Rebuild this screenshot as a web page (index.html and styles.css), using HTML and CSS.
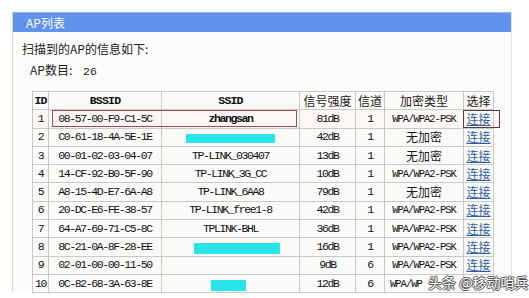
FILE: index.html
```html
<!DOCTYPE html>
<html lang="zh-CN">
<head>
    <meta charset="UTF-8">
    <meta name="viewport" content="width=device-width, initial-scale=1.0">
    <title>AP列表</title>
    <link rel="stylesheet" href="styles.css">
</head>
<body>
    <div class="panel">
        <div class="panel-title">AP列表</div>
        <div class="panel-body">
            <p class="intro">扫描到的AP的信息如下:</p>
            <p class="count"><span class="count-label">AP数目:</span><span class="count-num">26</span></p>
            <div class="table-wrap">
                <table class="ap-table">
                    <colgroup>
                        <col style="width:16px">
                        <col style="width:113px">
                        <col style="width:138px">
                        <col style="width:56px">
                        <col style="width:29px">
                        <col style="width:79px">
                        <col style="width:30px">
                    </colgroup>
                    <thead>
                        <tr>
                            <th class="mono">ID</th>
                            <th class="mono">BSSID</th>
                            <th class="mono">SSID</th>
                            <th>信号强度</th>
                            <th>信道</th>
                            <th>加密类型</th>
                            <th>选择</th>
                        </tr>
                    </thead>
                    <tbody>
                        <tr class="picked">
                            <td class="mono">1</td><td class="mono">08-57-00-F9-C1-5C</td><td class="mono ssid-bold">zhangsan</td>
                            <td class="mono">81dB</td><td class="mono">1</td><td class="mono small">WPA/WPA2-PSK</td><td><a href="#">连接</a></td>
                        </tr>
                        <tr>
                            <td class="mono">2</td><td class="mono">C0-61-18-4A-5E-1E</td><td><span class="redact r2"></span></td>
                            <td class="mono">42dB</td><td class="mono">1</td><td>无加密</td><td><a href="#">连接</a></td>
                        </tr>
                        <tr>
                            <td class="mono">3</td><td class="mono">00-01-02-03-04-07</td><td class="mono">TP-LINK_030407</td>
                            <td class="mono">13dB</td><td class="mono">1</td><td>无加密</td><td><a href="#">连接</a></td>
                        </tr>
                        <tr>
                            <td class="mono">4</td><td class="mono">14-CF-92-B0-5F-90</td><td class="mono">TP-LINK_3G_CC</td>
                            <td class="mono">10dB</td><td class="mono">1</td><td class="mono small">WPA/WPA2-PSK</td><td><a href="#">连接</a></td>
                        </tr>
                        <tr>
                            <td class="mono">5</td><td class="mono">A8-15-4D-E7-6A-A8</td><td class="mono">TP-LINK_6AA8</td>
                            <td class="mono">79dB</td><td class="mono">1</td><td>无加密</td><td><a href="#">连接</a></td>
                        </tr>
                        <tr>
                            <td class="mono">6</td><td class="mono">20-DC-E6-FE-38-57</td><td class="mono">TP-LINK_free1-8</td>
                            <td class="mono">42dB</td><td class="mono">1</td><td class="mono small">WPA/WPA2-PSK</td><td><a href="#">连接</a></td>
                        </tr>
                        <tr>
                            <td class="mono">7</td><td class="mono">64-A7-69-71-C5-8C</td><td class="mono">TPLINK-BHL</td>
                            <td class="mono">36dB</td><td class="mono">1</td><td class="mono small">WPA/WPA2-PSK</td><td><a href="#">连接</a></td>
                        </tr>
                        <tr>
                            <td class="mono">8</td><td class="mono">8C-21-0A-8F-28-EE</td><td><span class="redact r8"></span></td>
                            <td class="mono">16dB</td><td class="mono">1</td><td class="mono small">WPA/WPA2-PSK</td><td><a href="#">连接</a></td>
                        </tr>
                        <tr>
                            <td class="mono">9</td><td class="mono">02-01-00-00-11-50</td><td></td>
                            <td class="mono">9dB</td><td class="mono">6</td><td class="mono small">WPA/WPA2-PSK</td><td><a href="#">连接</a></td>
                        </tr>
                        <tr>
                            <td class="mono">10</td><td class="mono">0C-82-68-3A-63-8E</td><td><span class="redact r10"></span></td>
                            <td class="mono">12dB</td><td class="mono">6</td><td class="mono small cut">WPA/WP</td><td></td>
                        </tr>
                    </tbody>
                </table>
                <div class="mark mark-row"></div>
                <div class="mark mark-link"></div>
            </div>
        </div>
    </div>
    <div class="watermark">头条 @移动哨兵</div>
</body>
</html>
```

FILE: styles.css
```css
body {
    margin: 0;
    background-color: #fff;
    font-family: "Noto Sans CJK SC", "Liberation Sans", sans-serif;
    font-size: 12px;
    color: #222;
    position: relative;
    height: 298px;
    overflow: hidden;
}
.panel {
    margin: 12px 0 0 12px;
    width: 500px;
    height: 280px;
    background-color: #fbfbf9;
    border-left: 1px solid #d8d8d4;
    border-right: 1px solid #e4e4e0;
    box-sizing: border-box;
}
.panel-title {
    height: 20px;
    line-height: 20px;
    padding-left: 13px;
    background-color: #6293ec;
    border-top: 1px solid #8fb2f0;
    box-sizing: border-box;
    color: #fff;
    font-size: 12px;
}
.panel-body {
    padding: 9px 0 0 9px;
}
.intro {
    margin: 0;
    height: 16px;
    line-height: 16px;
}
.count {
    margin: 5px 0 0 8px;
    height: 16px;
    line-height: 16px;
}
.count-label {
    display: inline-block;
    width: 53px;
}
.count-num {
    font-family: "Liberation Mono", monospace;
    font-size: 11.5px;
}
.table-wrap {
    position: relative;
    margin: 13px 0 0 10px;
    width: 461px;
}
.ap-table {
    width: 461px;
    table-layout: fixed;
    border-collapse: collapse;
    background-color: #fafaf8;
    border: 1px solid #a9a9a6;
}
.ap-table th,
.ap-table td {
    height: 17.3px;
    padding: 0;
    border: 1px solid #c9c9c6;
    text-align: center;
    white-space: nowrap;
    overflow: hidden;
    font-weight: normal;
    font-size: 12px;
    line-height: 16px;
    color: #1a1a1a;
}
.ap-table .mono {
    font-family: "Liberation Mono", monospace;
    font-size: 11.5px;
    letter-spacing: -1.4px;
    color: #111;
}
.ap-table th.mono {
    font-weight: bold;
    letter-spacing: -0.8px;
}
.ap-table .small {
    font-size: 10.5px;
    letter-spacing: -1px;
}
.ap-table .cut {
    text-align: left;
    padding-left: 5px;
}
.ap-table .ssid-bold {
    font-weight: bold;
}
.ap-table .picked td {
    background-color: #fcf6f5;
}
.ap-table a {
    color: #2e5f9e;
    text-decoration: underline;
}
.redact {
    display: inline-block;
    vertical-align: middle;
    background-color: #28e3e8;
    border-radius: 1px;
}
.r2 {
    width: 89px;
    height: 9px;
}
.r8 {
    width: 86px;
    height: 11px;
    margin-left: 12px;
}
.r10 {
    width: 35px;
    height: 11px;
    margin-left: -4px;
}
.mark {
    position: absolute;
    border: 1px solid #9a5050;
    box-sizing: border-box;
}
.mark-row {
    left: 20px;
    top: 19px;
    width: 245px;
    height: 17px;
}
.mark-link {
    left: 431px;
    top: 19px;
    width: 37px;
    height: 18px;
    border-color: #5e3a3a;
}
.watermark {
    position: absolute;
    left: 428px;
    top: 274px;
    font-size: 14px;
    line-height: 16px;
    color: #fff;
    text-shadow: 1px 0 0 #555, -1px 0 0 #555, 0 1px 0 #555, 0 -1px 0 #555;
}
```
